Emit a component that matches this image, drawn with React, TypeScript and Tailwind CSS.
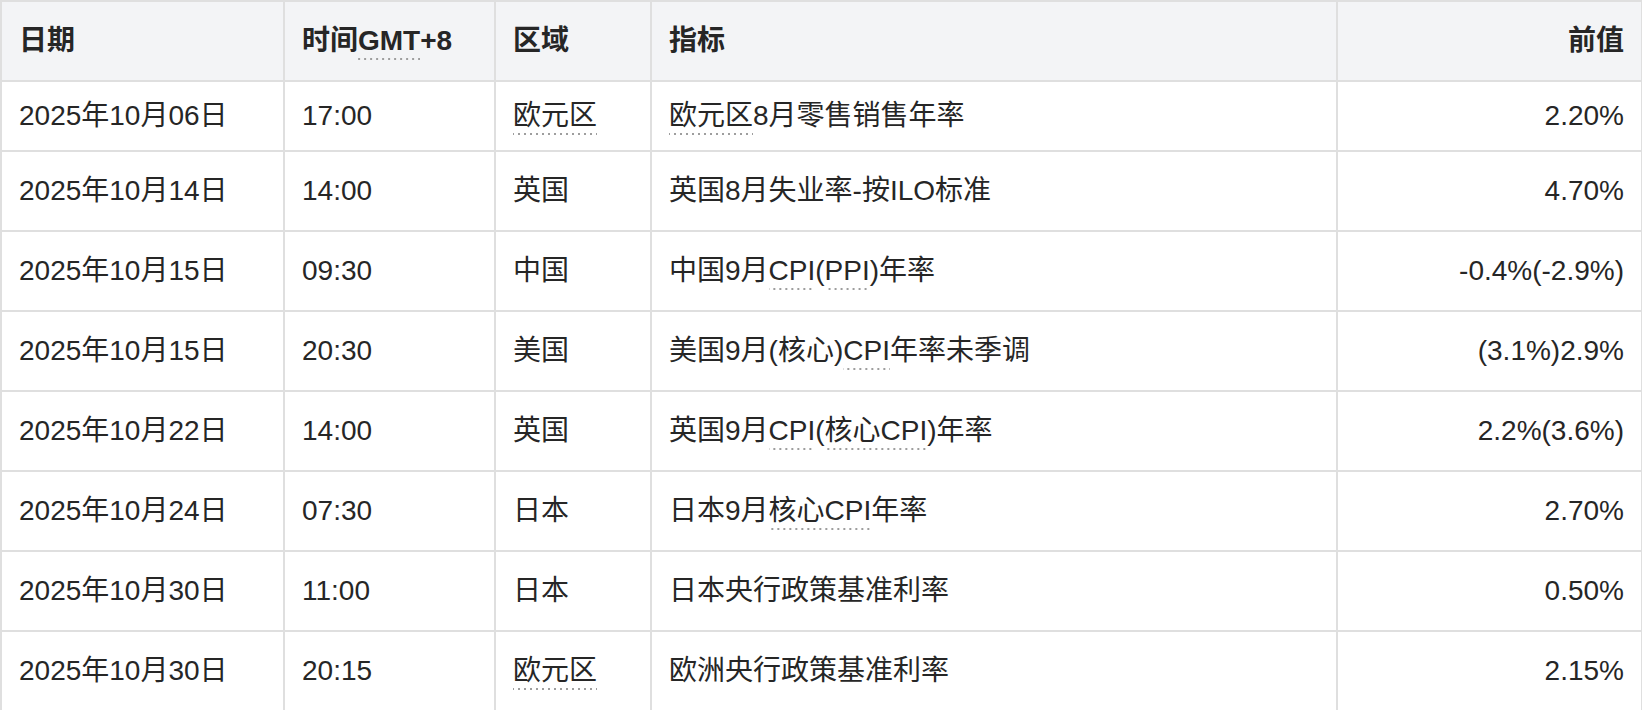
import React from "react";

type Part = string | { u: string };

type Row = {
  date: string;
  time: string;
  region: Part[];
  indicator: Part[];
  prev: string;
};

const rows: Row[] = [
  { date: "2025年10月06日", time: "17:00", region: [{ u: "欧元区" }], indicator: [{ u: "欧元区" }, "8月零售销售年率"], prev: "2.20%" },
  { date: "2025年10月14日", time: "14:00", region: ["英国"], indicator: ["英国8月失业率-按ILO标准"], prev: "4.70%" },
  { date: "2025年10月15日", time: "09:30", region: ["中国"], indicator: ["中国9月", { u: "CPI" }, "(", { u: "PPI" }, ")年率"], prev: "-0.4%(-2.9%)" },
  { date: "2025年10月15日", time: "20:30", region: ["美国"], indicator: ["美国9月(核心)", { u: "CPI" }, "年率未季调"], prev: "(3.1%)2.9%" },
  { date: "2025年10月22日", time: "14:00", region: ["英国"], indicator: ["英国9月", { u: "CPI" }, "(", { u: "核心CPI" }, ")年率"], prev: "2.2%(3.6%)" },
  { date: "2025年10月24日", time: "07:30", region: ["日本"], indicator: ["日本9月", { u: "核心CPI" }, "年率"], prev: "2.70%" },
  { date: "2025年10月30日", time: "11:00", region: ["日本"], indicator: ["日本央行政策基准利率"], prev: "0.50%" },
  { date: "2025年10月30日", time: "20:15", region: [{ u: "欧元区" }], indicator: ["欧洲央行政策基准利率"], prev: "2.15%" },
];

// dotted underline used for glossary terms
function Dotted({ children }: { children: React.ReactNode }) {
  return (
    <span className="bg-[radial-gradient(circle,#9e9e9e_1.1px,transparent_1.5px)] bg-[length:6px_4px] bg-bottom bg-repeat-x pb-[5px]">
      {children}
    </span>
  );
}

function Parts({ parts }: { parts: Part[] }) {
  return (
    <>
      {parts.map((p, i) =>
        typeof p === "string" ? <span key={i}>{p}</span> : <Dotted key={i}>{p.u}</Dotted>
      )}
    </>
  );
}

export default function App() {
  return (
    <div className="h-[710px] w-[1642px] overflow-hidden bg-white font-['Liberation_Sans','Noto_Sans_CJK_SC',sans-serif] text-[28px] text-[#262626]">
      <table className="w-[1641px] table-fixed border-collapse border-2 border-[#dfdfdf]">
        <colgroup>
          <col className="w-[283px]" />
          <col className="w-[211px]" />
          <col className="w-[156px]" />
          <col className="w-[686px]" />
          <col className="w-[305px]" />
        </colgroup>
        <thead>
          <tr className="h-[80px] bg-[#f3f4f6] font-semibold">
            <th className="border-2 border-[#dfdfdf] px-[17px] text-left align-middle">日期</th>
            <th className="border-2 border-[#dfdfdf] px-[17px] text-left align-middle">
              时间<Dotted>GMT</Dotted>+8
            </th>
            <th className="border-2 border-[#dfdfdf] px-[17px] text-left align-middle">区域</th>
            <th className="border-2 border-[#dfdfdf] px-[17px] text-left align-middle">指标</th>
            <th className="border-2 border-[#dfdfdf] px-[17px] text-right align-middle">前值</th>
          </tr>
        </thead>
        <tbody>
          {rows.map((r, i) => (
            <tr key={i} className={i === 0 ? "h-[70px]" : "h-[80px]"}>
              <td className="border-2 border-[#dfdfdf] px-[17px] align-middle whitespace-nowrap">{r.date}</td>
              <td className="border-2 border-[#dfdfdf] px-[17px] align-middle">{r.time}</td>
              <td className="border-2 border-[#dfdfdf] px-[17px] align-middle">
                <Parts parts={r.region} />
              </td>
              <td className="border-2 border-[#dfdfdf] px-[17px] align-middle">
                <Parts parts={r.indicator} />
              </td>
              <td className="border-2 border-[#dfdfdf] px-[17px] text-right align-middle">{r.prev}</td>
            </tr>
          ))}
        </tbody>
      </table>
    </div>
  );
}
